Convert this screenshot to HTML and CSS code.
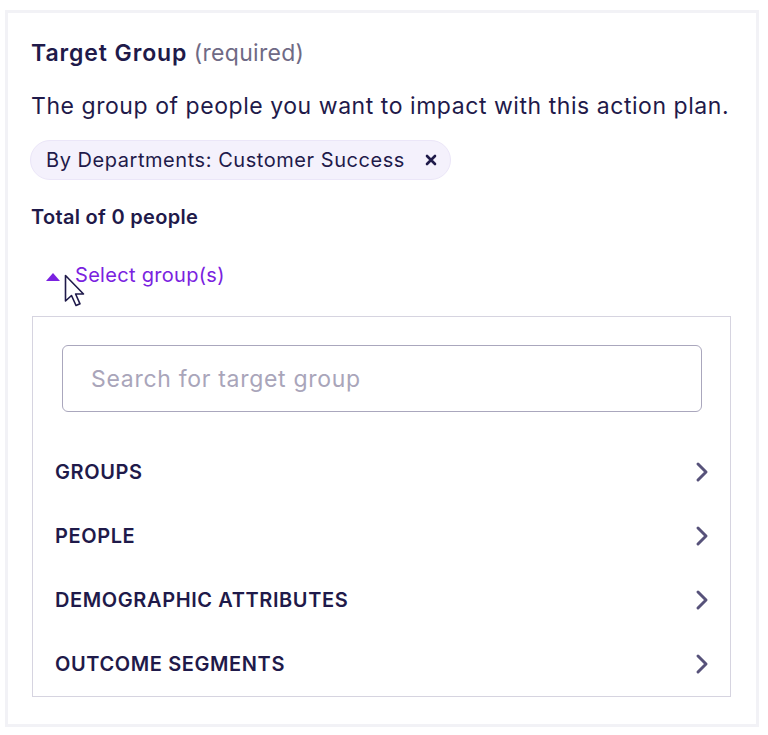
FILE: index.html
```html
<!DOCTYPE html>
<html lang="en">
<head>
<meta charset="utf-8">
<title>Target Group</title>
<link rel="stylesheet" href="styles.css">
</head>
<body>
<div class="card">
  <div class="title"><span class="title-strong">Target Group</span> <span class="title-muted">(required)</span></div>
  <p class="desc">The group of people you want to impact with this action plan.</p>
  <div class="chip-row">
    <span class="chip">By Departments: Customer Success
      <svg class="chip-x" width="12" height="12" viewBox="0 0 12 12"><path d="M2 2 L10 10 M10 2 L2 10" stroke="#1f1a4a" stroke-width="2.6" stroke-linecap="round"/></svg>
    </span>
  </div>
  <div class="total">Total of 0 people</div>
  <div class="toggle">
    <svg class="caret" width="14" height="8" viewBox="0 0 14 8"><path d="M0 8 L7 0 L14 8 Z" fill="#7a22e0"/></svg>
    <span class="toggle-label">Select group(s)</span>
    <svg class="cursor" width="22" height="34" viewBox="0 0 22 34"><path d="M1.5 1.5 L1.5 27 L7.5 21.5 L12 31.5 L16 29.8 L11.6 20 L19.5 20 Z" fill="#ffffff" stroke="#1f1a4a" stroke-width="1.6" stroke-linejoin="round"/></svg>
  </div>
  <div class="dropdown">
    <div class="search">Search for target group</div>
    <ul class="options">
      <li class="option"><span>GROUPS</span><svg class="chev" width="14" height="22" viewBox="0 0 14 22"><path d="M3 3 L11 11 L3 19" fill="none" stroke="#57527a" stroke-width="3" stroke-linecap="round" stroke-linejoin="round"/></svg></li>
      <li class="option"><span>PEOPLE</span><svg class="chev" width="14" height="22" viewBox="0 0 14 22"><path d="M3 3 L11 11 L3 19" fill="none" stroke="#57527a" stroke-width="3" stroke-linecap="round" stroke-linejoin="round"/></svg></li>
      <li class="option"><span>DEMOGRAPHIC ATTRIBUTES</span><svg class="chev" width="14" height="22" viewBox="0 0 14 22"><path d="M3 3 L11 11 L3 19" fill="none" stroke="#57527a" stroke-width="3" stroke-linecap="round" stroke-linejoin="round"/></svg></li>
      <li class="option"><span>OUTCOME SEGMENTS</span><svg class="chev" width="14" height="22" viewBox="0 0 14 22"><path d="M3 3 L11 11 L3 19" fill="none" stroke="#57527a" stroke-width="3" stroke-linecap="round" stroke-linejoin="round"/></svg></li>
    </ul>
  </div>
</div>
</body>
</html>
```

FILE: styles.css
```css
* { box-sizing: border-box; }
html, body { margin: 0; padding: 0; background: #ffffff; }
body {
  font-family: "Inter", "Liberation Sans", sans-serif;
  color: #1f1a4a;
}
.card {
  margin: 10px 0 0 5px;
  width: 754px;
  height: 717px;
  border: 3px solid #f2f2f6;
  padding: 25px 25px 0 23px;
}
.title {
  font-size: 23px;
  line-height: 28px;
  height: 28px;
  margin-top: 1px;
}
.title-strong { font-weight: 600; letter-spacing: 0.9px; }
.title-muted { color: #6f6a85; letter-spacing: 0.3px; }
.desc {
  margin: 24px 0 0;
  font-size: 23px;
  line-height: 30px;
  letter-spacing: 0.55px;
}
.chip-row { margin-top: 19px; display: flex; }
.chip {
  display: inline-flex;
  align-items: center;
  gap: 20px;
  height: 40px;
  margin-left: -1px;
  padding: 0 13px 0 15px;
  border-radius: 20px;
  background: #f4f1fc;
  border: 1px solid #ebe6f8;
  font-size: 20px;
  letter-spacing: 0.55px;
}
.chip-x { display: block; }
.total {
  margin-top: 24px;
  font-size: 20px;
  line-height: 26px;
  font-weight: 600;
  letter-spacing: 0.3px;
}
.toggle {
  position: relative;
  margin-top: 32px;
  display: flex;
  align-items: center;
  gap: 15px;
  padding-left: 15px;
  height: 26px;
  color: #7a22e0;
  font-size: 20px;
  line-height: 26px;
  letter-spacing: 0.3px;
}
.caret { display: block; margin-top: 3px; }
.cursor { position: absolute; left: 33px; top: 12px; }
.dropdown {
  margin-top: 28px;
  margin-left: 1px;
  border: 1px solid #d6d4e0;
  padding: 28px 28px 0 29px;
}
.search {
  height: 67px;
  border: 1.5px solid #aaa7bd;
  border-radius: 6px;
  padding-left: 28px;
  display: flex;
  align-items: center;
  color: #a9a5ba;
  font-size: 23px;
  letter-spacing: 0.7px;
}
.options {
  list-style: none;
  margin: 28px -28px 0 -29px;
  padding: 0;
}
.option {
  height: 64px;
  display: flex;
  align-items: center;
  justify-content: space-between;
  padding: 0 21px 0 22px;
  font-size: 20px;
  font-weight: 600;
  letter-spacing: 0.6px;
}
.chev { display: block; }
```
